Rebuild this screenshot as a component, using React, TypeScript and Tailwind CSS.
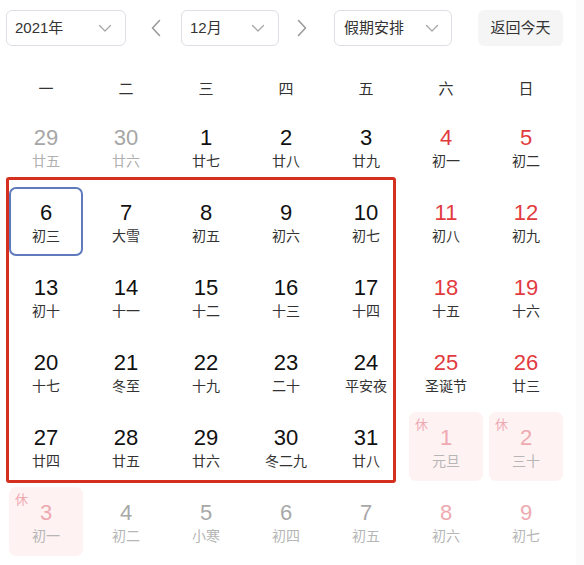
import React from "react";

type Kind = "prev" | "cur" | "next";
type Cell = {
  d: number;
  l: string;
  kind: Kind;
  weekend?: boolean;
  today?: boolean;
  rest?: boolean;
};

const rows: Cell[][] = [
  [
    { d: 29, l: "廿五", kind: "prev" },
    { d: 30, l: "廿六", kind: "prev" },
    { d: 1, l: "廿七", kind: "cur" },
    { d: 2, l: "廿八", kind: "cur" },
    { d: 3, l: "廿九", kind: "cur" },
    { d: 4, l: "初一", kind: "cur", weekend: true },
    { d: 5, l: "初二", kind: "cur", weekend: true },
  ],
  [
    { d: 6, l: "初三", kind: "cur", today: true },
    { d: 7, l: "大雪", kind: "cur" },
    { d: 8, l: "初五", kind: "cur" },
    { d: 9, l: "初六", kind: "cur" },
    { d: 10, l: "初七", kind: "cur" },
    { d: 11, l: "初八", kind: "cur", weekend: true },
    { d: 12, l: "初九", kind: "cur", weekend: true },
  ],
  [
    { d: 13, l: "初十", kind: "cur" },
    { d: 14, l: "十一", kind: "cur" },
    { d: 15, l: "十二", kind: "cur" },
    { d: 16, l: "十三", kind: "cur" },
    { d: 17, l: "十四", kind: "cur" },
    { d: 18, l: "十五", kind: "cur", weekend: true },
    { d: 19, l: "十六", kind: "cur", weekend: true },
  ],
  [
    { d: 20, l: "十七", kind: "cur" },
    { d: 21, l: "冬至", kind: "cur" },
    { d: 22, l: "十九", kind: "cur" },
    { d: 23, l: "二十", kind: "cur" },
    { d: 24, l: "平安夜", kind: "cur" },
    { d: 25, l: "圣诞节", kind: "cur", weekend: true },
    { d: 26, l: "廿三", kind: "cur", weekend: true },
  ],
  [
    { d: 27, l: "廿四", kind: "cur" },
    { d: 28, l: "廿五", kind: "cur" },
    { d: 29, l: "廿六", kind: "cur" },
    { d: 30, l: "冬二九", kind: "cur" },
    { d: 31, l: "廿八", kind: "cur" },
    { d: 1, l: "元旦", kind: "next", weekend: true, rest: true },
    { d: 2, l: "三十", kind: "next", weekend: true, rest: true },
  ],
  [
    { d: 3, l: "初一", kind: "next", rest: true },
    { d: 4, l: "初二", kind: "next" },
    { d: 5, l: "小寒", kind: "next" },
    { d: 6, l: "初四", kind: "next" },
    { d: 7, l: "初五", kind: "next" },
    { d: 8, l: "初六", kind: "next", weekend: true },
    { d: 9, l: "初七", kind: "next", weekend: true },
  ],
];

const weekdays = ["一", "二", "三", "四", "五", "六", "日"];

function ChevronDown() {
  return (
    <svg width="14" height="14" viewBox="0 0 14 14" fill="none">
      <path d="M1.5 4.5 L7 10 L12.5 4.5" stroke="#a8a8a8" strokeWidth="1.3" strokeLinecap="round" strokeLinejoin="round" />
    </svg>
  );
}

function Arrow({ dir }: { dir: "l" | "r" }) {
  return (
    <svg width="12" height="18" viewBox="0 0 12 18" fill="none">
      {dir === "l" ? (
        <path d="M9.5 1.5 L2.5 9 L9.5 16.5" stroke="#9a9a9a" strokeWidth="1.6" strokeLinecap="round" strokeLinejoin="round" />
      ) : (
        <path d="M2.5 1.5 L9.5 9 L2.5 16.5" stroke="#9a9a9a" strokeWidth="1.6" strokeLinecap="round" strokeLinejoin="round" />
      )}
    </svg>
  );
}

function DayCell({ c }: { c: Cell }) {
  let numColor = "text-[#111111]";
  let lunarColor = "text-[#333333]";
  if (c.kind === "prev") {
    numColor = "text-[#a6a6a6]";
    lunarColor = "text-[#b0b0b0]";
  } else if (c.kind === "next") {
    numColor = c.weekend || c.rest ? "text-[#eeaab0]" : "text-[#a8a8a8]";
    lunarColor = "text-[#b6b6b6]";
  } else if (c.weekend) {
    numColor = "text-[#e23b3f]";
  }
  const box = c.today
    ? "border-2 border-[#5f7bbd]"
    : c.rest
    ? "bg-[#fff2f3] border-2 border-transparent"
    : "border-2 border-transparent";
  return (
    <div className="h-[75px] p-[3px]">
      <div className={`relative flex h-[69px] flex-col items-center rounded-[7px] ${box}`}>
        {c.rest && (
          <span className="absolute left-[4px] top-[3px] text-[13px] leading-[16px] text-[#f0a8b0]">休</span>
        )}
        <span className={`mt-[11px] text-[22px] leading-[26px] ${numColor}`}>{c.d}</span>
        <span className={`mt-[1px] text-[14px] leading-[18px] ${lunarColor}`}>{c.l}</span>
      </div>
    </div>
  );
}

export default function App() {
  return (
    <div
      className="relative flex h-[565px] w-[584px] bg-white"
      style={{ fontFamily: '"Liberation Sans", "Noto Sans CJK SC", sans-serif' }}
    >
      <div className="w-[576px]">
        <div className="flex items-center pl-[6px] pt-[10px]">
          <div className="flex h-[36px] w-[120px] items-center justify-between rounded-[6px] border border-[#dcdfe6] pl-[8px] pr-[13px] text-[15px] text-[#333333]">
            <span>2021年</span>
            <ChevronDown />
          </div>
          <div className="flex w-[55px] justify-center pl-[4px]">
            <Arrow dir="l" />
          </div>
          <div className="flex h-[36px] w-[98px] items-center justify-between rounded-[6px] border border-[#dcdfe6] pl-[8px] pr-[13px] text-[15px] text-[#333333]">
            <span>12月</span>
            <ChevronDown />
          </div>
          <div className="flex w-[55px] justify-center pr-[10px]">
            <Arrow dir="r" />
          </div>
          <div className="flex h-[36px] w-[118px] items-center justify-between rounded-[6px] border border-[#dcdfe6] pl-[9px] pr-[12px] text-[15px] text-[#333333]">
            <span>假期安排</span>
            <ChevronDown />
          </div>
          <div className="ml-[26px] flex h-[36px] w-[85px] items-center justify-center rounded-[6px] bg-[#f5f5f6] text-[15px] text-[#333333]">
            返回今天
          </div>
        </div>
        <div className="ml-[6px] mt-[24px] grid h-[39px] w-[560px] grid-cols-7 items-center">
          {weekdays.map((w) => (
            <div key={w} className="text-center text-[15px] text-[#333333]">
              {w}
            </div>
          ))}
        </div>
        <div className="ml-[6px] grid w-[560px] grid-cols-7">
          {rows.flat().map((c, i) => (
            <DayCell key={i} c={c} />
          ))}
        </div>
      </div>
      <div className="flex-1 bg-[#fbfbfb]" />
      <div className="pointer-events-none absolute left-[6px] top-[177px] h-[306px] w-[390px] rounded-[3px] border-[3px] border-[#d5301f]" />
    </div>
  );
}
